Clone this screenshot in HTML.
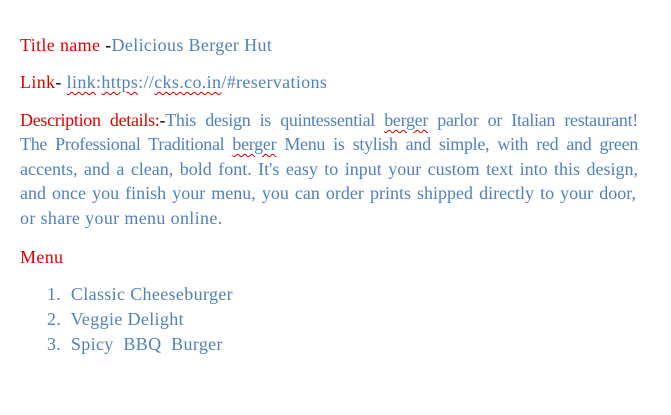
<!DOCTYPE html>
<html><head><meta charset="utf-8"><style>
body{margin:0;background:#fff;width:671px;height:415px;overflow:hidden;font-family:"Liberation Serif",serif;font-size:18px;color:#4f81bd;}
.r{color:#e00000}
.k{color:#000}
.l{position:absolute;left:20px;white-space:nowrap;letter-spacing:0.35px}
.j{position:absolute;left:20px;width:617px;text-align:justify;text-align-last:justify;white-space:nowrap;}
.w{text-decoration:underline wavy #c00;text-decoration-thickness:1px;text-underline-offset:3px}
</style></head><body>
<div class="l" style="top:35px"><span class="r">Title name </span><span class="k">-</span>Delicious Berger Hut</div>
<div class="l" style="top:72px"><span class="r">Link</span><span class="k">-</span> <span class="w">link</span>:<span class="w">https</span>://<span class="w">cks.co.in</span>/#reservations</div>
<div class="j" style="top:110px;width:618px;letter-spacing:-0.3px"><span class="r">Description details:</span><span class="k">-</span>This design is quintessential <span class="w">berger</span> parlor or Italian restaurant!</div>
<div class="j" style="top:134px;width:618px;letter-spacing:-0.3px">The Professional Traditional <span class="w">berger</span> Menu is stylish and simple, with red and green</div>
<div class="j" style="top:159px;width:618px">accents, and a clean, bold font. It's easy to input your custom text into this design,</div>
<div class="j" style="top:183px;width:616px">and once you finish your menu, you can order prints shipped directly to your door,</div>
<div class="l" style="top:208px">or share your menu online.</div>
<div class="l r" style="top:247px">Menu</div>
<div class="l" style="top:284px;left:47px">1.&nbsp; Classic Cheeseburger</div>
<div class="l" style="top:309px;left:47px">2.&nbsp; Veggie Delight</div>
<div class="l" style="top:334px;left:47px">3.&nbsp; Spicy&nbsp; BBQ&nbsp; Burger</div>
</body></html>
